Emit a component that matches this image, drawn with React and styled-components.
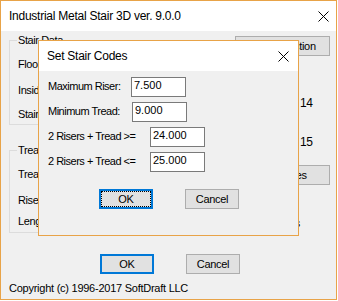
import React from 'react';
import styled, { createGlobalStyle } from 'styled-components';

const ACCENT = '#e8a348';
const UI_FONT = '"Liberation Sans", Arial, sans-serif';

const GlobalStyle = createGlobalStyle`
  html, body { margin: 0; padding: 0; background: #fff; }
  body { font-family: ${UI_FONT}; font-size: 11px; color: #000; }
  * { box-sizing: border-box; }
`;

const Window = styled.div`
  position: relative;
  width: 337px;
  height: 300px;
  border: 1px solid ${ACCENT};
  background: #f0f0f0;
  display: flex;
  flex-direction: column;
`;

const TitleBar = styled.div`
  flex: none;
  height: 30px;
  background: #fff;
  display: flex;
  align-items: center;
  justify-content: space-between;
  padding-left: 8px;
`;

const TitleText = styled.span`
  font-family: ${UI_FONT};
  font-size: 12px;
  letter-spacing: -0.25px;
  white-space: nowrap;
`;

const CloseBox = styled.div`
  width: ${(p) => p.$w}px;
  height: 100%;
  display: flex;
  align-items: center;
  justify-content: center;
`;

const CloseIcon = () => (
  <svg width="11" height="11" viewBox="0 0 11 11">
    <path d="M0.5 0.5 L10.5 10.5 M10.5 0.5 L0.5 10.5" stroke="#000" strokeWidth="1" fill="none" />
  </svg>
);

const Client = styled.div`
  flex: 1;
  display: flex;
  flex-direction: column;
  padding: 3px 0 0 8px;
`;

const Main = styled.div`
  display: grid;
  grid-template-columns: 216px 95px;
  column-gap: 10px;
  align-items: start;
`;

const LeftCol = styled.div`
  display: flex;
  flex-direction: column;
`;

const Group = styled.fieldset`
  margin: ${(p) => p.$mt || 0}px 0 0 0;
  padding: 11px 8px ${(p) => p.$pb}px 8px;
  border: 1px solid #dcdcdc;
  min-width: 0;
  display: flex;
  flex-direction: column;
`;

const Legend = styled.legend`
  padding: 0 1px;
  margin-left: -1px;
  font-size: 11px;
  line-height: 13px;
  letter-spacing: -0.4px;
`;

const FieldText = styled.div`
  margin-top: ${(p) => p.$mt || 0}px;
  font-size: 11px;
  line-height: 13px;
  letter-spacing: -0.4px;
  white-space: nowrap;
`;

const RightCol = styled.div`
  display: flex;
  flex-direction: column;
  align-items: flex-start;
`;

const SideButton = styled.button`
  margin-top: ${(p) => p.$mt}px;
  width: 95px;
  height: 20px;
  padding: 0;
  background: #e1e1e1;
  border: 1px solid #adadad;
  font-family: ${UI_FONT};
  font-size: 11px;
  letter-spacing: -0.3px;
  color: #000;
`;

const SideValue = styled.div`
  margin-top: ${(p) => p.$mt}px;
  margin-left: ${(p) => p.$indent}px;
  font-size: ${(p) => p.$size}px;
  line-height: ${(p) => p.$lh}px;
  letter-spacing: -0.3px;
  white-space: nowrap;
`;

const ButtonRow = styled.div`
  display: flex;
  gap: 32px;
  margin-top: ${(p) => p.$mt}px;
  padding-left: ${(p) => p.$pl}px;
`;

const Button = styled.button`
  width: 54px;
  height: 20px;
  padding: 0;
  background: #e1e1e1;
  border: ${(p) => (p.$default ? '2px solid #0078d7' : '1px solid #adadad')};
  font-family: ${UI_FONT};
  font-size: 11px;
  letter-spacing: -0.3px;
  color: #000;
  ${(p) => (p.$focused ? 'outline: 1px dotted #000; outline-offset: -3px;' : 'outline: none;')}
`;

const Copyright = styled.div`
  margin-top: 8px;
  font-size: 11px;
  line-height: 13px;
  letter-spacing: -0.25px;
  white-space: nowrap;
`;

const Dialog = styled.div`
  position: absolute;
  left: 37px;
  top: 39px;
  width: 261px;
  height: 196px;
  border: 1px solid ${ACCENT};
  background: #f0f0f0;
  display: flex;
  flex-direction: column;
`;

const DialogBody = styled.div`
  display: flex;
  flex-direction: column;
  gap: 5px;
  padding: 6px 0 0 9px;
`;

const CodeRow = styled.div`
  display: flex;
  align-items: center;
  height: 20px;
`;

const CodeLabel = styled.label`
  width: ${(p) => p.$w}px;
  padding-bottom: 3px;
  font-size: 11px;
  letter-spacing: -0.5px;
  white-space: nowrap;
`;

const CodeInput = styled.input`
  width: 55px;
  height: 20px;
  border: 1px solid #7a7a7a;
  background: #fff;
  padding: 0 2px 5px 2px;
  margin: 0;
  font-family: ${UI_FONT};
  font-size: 11px;
  color: #000;
  outline: none;
`;

const codes = [
  { label: 'Maximum Riser:', value: '7.500', w: 83 },
  { label: 'Minimum Tread:', value: '9.000', w: 84 },
  { label: '2 Risers + Tread >=', value: '24.000', w: 102 },
  { label: '2 Risers + Tread <=', value: '25.000', w: 102 },
];

export default function App() {
  return (
    <>
      <GlobalStyle />
      <Window>
        <TitleBar>
          <TitleText>Industrial Metal Stair 3D ver. 9.0.0</TitleText>
          <CloseBox $w={26}>
            <CloseIcon />
          </CloseBox>
        </TitleBar>
        <Client>
          <Main>
            <LeftCol>
              <Group $pb={3}>
                <Legend>Stair Data</Legend>
                <FieldText>Floor to Floor Height:</FieldText>
                <FieldText $mt={13}>Inside Width:</FieldText>
                <FieldText $mt={11}>Stair Angle:</FieldText>
              </Group>
              <Group $mt={19} $pb={4}>
                <Legend>Tread Data</Legend>
                <FieldText>Tread Type:</FieldText>
                <FieldText $mt={13}>Riser Height:</FieldText>
                <FieldText $mt={8}>Length of Stringers:</FieldText>
              </Group>
            </LeftCol>
            <RightCol>
              <SideButton $mt={2}>Print Selection</SideButton>
              <SideValue $mt={39} $indent={65} $size={12} $lh={16}>14</SideValue>
              <SideValue $mt={23} $indent={65} $size={12} $lh={16}>15</SideValue>
              <SideButton $mt={15}>Set Codes</SideButton>
              <SideValue $mt={32} $indent={35} $size={11} $lh={13}>inches</SideValue>
            </RightCol>
          </Main>
          <ButtonRow $mt={21} $pl={91}>
            <Button $default>OK</Button>
            <Button>Cancel</Button>
          </ButtonRow>
          <Copyright>Copyright (c) 1996-2017 SoftDraft LLC</Copyright>
        </Client>

        <Dialog>
          <TitleBar>
            <TitleText>Set Stair Codes</TitleText>
            <CloseBox $w={30}>
              <CloseIcon />
            </CloseBox>
          </TitleBar>
          <DialogBody>
            {codes.map((c) => (
              <CodeRow key={c.label}>
                <CodeLabel $w={c.w}>{c.label}</CodeLabel>
                <CodeInput readOnly defaultValue={c.value} />
              </CodeRow>
            ))}
          </DialogBody>
          <ButtonRow $mt={17} $pl={60}>
            <Button $default $focused>OK</Button>
            <Button>Cancel</Button>
          </ButtonRow>
        </Dialog>
      </Window>
    </>
  );
}
